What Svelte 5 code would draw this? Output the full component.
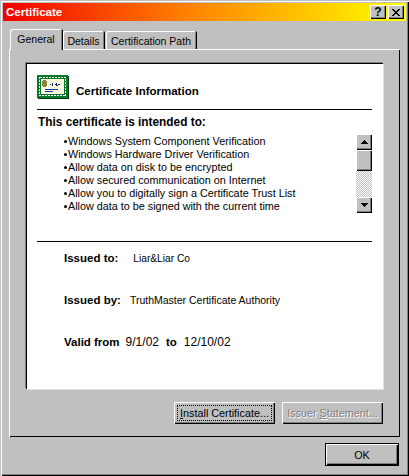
<script lang="ts">
  const purposes = [
    "Windows System Component Verification",
    "Windows Hardware Driver Verification",
    "Allow data on disk to be encrypted",
    "Allow secured communication on Internet",
    "Allow you to digitally sign a Certificate Trust List",
    "Allow data to be signed with the current time",
  ];
</script>

<div class="window">
  <div class="titlebar">
    <span class="titlebar__text">Certificate</span>
    <div class="titlebar__buttons">
      <button class="capbtn capbtn--help">?</button>
      <button class="capbtn capbtn--close" aria-label="Close">
        <svg width="8" height="7" viewBox="0 0 8 7" shape-rendering="crispEdges">
          <path d="M0 0h2v1h1v1h2V1h1V0h2v1H7v1H6v1H5v1h1v1h1v1h1v1H6V6H5V5H3v1H2v1H0V6h1V5h1V4h1V3H2V2H1V1H0z" fill="#000" />
        </svg>
      </button>
    </div>
  </div>

  <div class="tabs">
    <div class="tab tab--active">General</div>
    <div class="tab tab--details">Details</div>
    <div class="tab tab--path">Certification Path</div>
  </div>

  <div class="panel">
    <div class="sheet">
      <div class="head">
        <svg class="head__icon" width="32" height="24" viewBox="0 0 32 24" shape-rendering="crispEdges">
          <rect x="0" y="0" width="31" height="23" fill="#0a7a2a" />
          <rect x="31" y="1" width="1" height="23" fill="#003a10" />
          <rect x="1" y="23" width="31" height="1" fill="#003a10" />
          <rect x="2.5" y="2.5" width="26" height="18" fill="none" stroke="#fff" stroke-dasharray="2 1" />
          <rect x="4" y="4" width="23" height="15" fill="#fbf8e0" />
          <rect x="5" y="6" width="5" height="5" fill="#8a8040" />
          <rect x="6" y="5" width="3" height="7" fill="#8a8040" />
          <path d="M12 10h1V9h1v1h1V8h1v3h1V9h1v1h1V8h1v2h1V9h2v1h-2v1h-2V9h-2v2h-2v-1h-2z" fill="#102060" />
          <rect x="8" y="14" width="13" height="1" fill="#1830a0" />
          <rect x="8" y="16" width="8" height="1" fill="#1830a0" />
        </svg>
        <span class="head__title">Certificate Information</span>
      </div>

      <div class="rule"></div>

      <div class="intended">This certificate is intended to:</div>

      <div class="purposes">
        <ul class="purposes__list">
          {#each purposes as p}
            <li>{p}</li>
          {/each}
        </ul>
        <div class="scroll">
          <div class="scroll__btn">
            <svg width="7" height="4" viewBox="0 0 7 4" shape-rendering="crispEdges"><path d="M3 0h1v1h1v1h1v1h1v1H0V3h1V2h1V1h1z" /></svg>
          </div>
          <div class="scroll__thumb"></div>
          <div class="scroll__track"></div>
          <div class="scroll__btn">
            <svg width="7" height="4" viewBox="0 0 7 4" shape-rendering="crispEdges"><path d="M0 0h7v1H6v1H5v1H4v1H3V3H2V2H1V1H0z" /></svg>
          </div>
        </div>
      </div>

      <div class="rule rule--second"></div>

      <div class="details">
        <div class="row"><b>Issued to:</b><span class="row__to">Liar&amp;Liar Co</span></div>
        <div class="row"><b>Issued by:</b><span class="row__by">TruthMaster Certificate Authority</span></div>
        <div class="row">
          <b>Valid from</b><span class="row__from">9/1/02</span><b class="row__sep">to</b><span class="row__end">12/10/02</span>
        </div>
      </div>
    </div>

    <div class="actions">
      <button class="btn btn--focus"><span class="btn__focus"><u>I</u>nstall Certificate...</span></button>
      <button class="btn btn--off" disabled>Issuer <u>S</u>tatement...</button>
    </div>
  </div>

  <div class="footer">
    <button class="btn btn--ok">OK</button>
  </div>
</div>

<style>
  :global(body) {
    background: #c0c0c0;
  }
  .window {
    box-sizing: border-box;
    width: 409px;
    height: 476px;
    padding: 3px;
    background: #c0c0c0;
    box-shadow: inset 1px 1px 0 #c0c0c0, inset 2px 2px 0 #fff, inset -1px -1px 0 #000, inset -2px -2px 0 #808080;
    font-family: "Liberation Sans", Arial, sans-serif;
    font-size: 10.8px;
    color: #000;
    overflow: hidden;
  }
  .titlebar {
    display: flex;
    align-items: center;
    justify-content: space-between;
    height: 18px;
    padding: 0 2px 0 3px;
    background: linear-gradient(90deg, #f20000 0%, #ff8000 45%, #ffff00 100%);
  }
  .titlebar__text {
    color: #fff;
    font-weight: 700;
    font-size: 11.5px;
  }
  .titlebar__buttons {
    display: flex;
    gap: 2px;
  }
  .capbtn {
    display: flex;
    align-items: center;
    justify-content: center;
    width: 16px;
    height: 14px;
    padding: 0;
    border: 0;
    background: #c0c0c0;
    box-shadow: inset 1px 1px 0 #fff, inset -1px -1px 0 #000, inset -2px -2px 0 #808080;
    font: 700 12px "Liberation Sans", sans-serif;
    color: #000;
  }
  .tabs {
    display: flex;
    align-items: flex-end;
    height: 28px;
    margin-left: 7px;
    position: relative;
    z-index: 1;
  }
  .tab {
    box-sizing: border-box;
    height: 18px;
    padding: 4px 0 0;
    text-align: center;
    font-size: 10.5px;
    white-space: nowrap;
    border-radius: 2px 2px 0 0;
    background: #c0c0c0;
    box-shadow: inset 1px 1px 0 #fff, inset -1px 0 0 #808080, 1px 0 0 #000;
  }
  .tab--active {
    width: 52px;
    height: 21px;
    padding-top: 4px;
    margin-bottom: -1px;
  }
  .tab--details {
    width: 41px;
    margin-left: 1px;
  }
  .tab--path {
    width: 90px;
    margin-left: 2px;
  }
  .panel {
    box-sizing: border-box;
    height: 388px;
    margin: 0 6px;
    padding: 14px 17px 0;
    box-shadow: inset 1px 1px 0 #fff, inset -1px -1px 0 #000;
  }
  .sheet {
    box-sizing: border-box;
    height: 326px;
    padding: 12px 11px 0;
    background: #fff;
    box-shadow: inset 1px 1px 0 #000, -1px -1px 0 #808080, 1px 1px 0 #dfdfdf;
  }
  .head {
    display: flex;
    align-items: center;
    gap: 7px;
    height: 24px;
  }
  .head__icon {
    flex: none;
  }
  .head__title {
    margin-top: 7px;
    font-weight: 700;
    font-size: 11.5px;
  }
  .rule {
    height: 1px;
    margin-top: 10px;
    background: #000;
  }
  .rule--second {
    margin-top: 28px;
  }
  .intended {
    margin: 6px 0 0 1px;
    line-height: 13px;
    font-weight: 700;
    font-size: 11.85px;
  }
  .purposes {
    display: flex;
    justify-content: space-between;
    padding-left: 27px;
    height: 79px;
    margin-top: 5px;
  }
  .purposes__list {
    margin: 0;
    padding: 1px 0 0;
    list-style: none;
  }
  .purposes__list li {
    height: 13px;
    line-height: 13px;
    white-space: nowrap;
  }
  .purposes__list li::before {
    content: "";
    display: inline-block;
    width: 3px;
    height: 3px;
    margin-right: 1px;
    vertical-align: 2px;
    background: #000;
    border-radius: 50%;
  }
  .scroll {
    display: flex;
    flex-direction: column;
    width: 16px;
    flex: none;
  }
  .scroll__btn,
  .scroll__thumb {
    display: flex;
    align-items: center;
    justify-content: center;
    flex: none;
    background: #c0c0c0;
    box-shadow: inset 1px 1px 0 #fff, inset -1px -1px 0 #000, inset -2px -2px 0 #808080;
  }
  .scroll__btn {
    height: 16px;
  }
  .scroll__thumb {
    height: 21px;
  }
  .scroll__track {
    flex: 1;
    background: repeating-conic-gradient(#fff 0 25%, #c0c0c0 0 50%) 0 0 / 2px 2px;
  }
  .details {
    padding: 10px 0 0 27px;
    display: flex;
    flex-direction: column;
    gap: 29px;
  }
  .row {
    display: flex;
    height: 13px;
    line-height: 13px;
    font-size: 10.5px;
    white-space: nowrap;
  }
  .row b {
    font-size: 11.5px;
  }
  .row__to {
    margin-left: 15px;
    font-size: 10.2px;
  }
  .row__by {
    margin-left: 9px;
  }
  .row__from {
    margin-left: 6px;
    font-size: 12px;
  }
  .row__sep {
    margin-left: 7px;
  }
  .row__end {
    margin-left: 7px;
    font-size: 12px;
  }
  .actions {
    display: flex;
    justify-content: flex-end;
    gap: 7px;
    margin-top: 13px;
  }
  .btn {
    box-sizing: border-box;
    width: 101px;
    height: 22px;
    padding: 0;
    border: 0;
    background: #c0c0c0;
    box-shadow: inset 1px 1px 0 #fff, inset -1px -1px 0 #000, inset -2px -2px 0 #808080;
    font: 10.8px "Liberation Sans", Arial, sans-serif;
    color: #000;
    white-space: nowrap;
  }
  .btn__focus {
    display: flex;
    align-items: center;
    justify-content: center;
    height: 14px;
    margin: 0 3px;
    border: 1px dotted #000;
  }
  .btn--off {
    color: #808080;
    text-shadow: 1px 1px 0 #fff;
  }
  .footer {
    display: flex;
    justify-content: flex-end;
    margin: 6px 7px 0 0;
  }
  .btn--ok {
    width: 74px;
    height: 23px;
    box-shadow: inset 0 0 0 1px #000, inset 2px 2px 0 #fff, inset -2px -2px 0 #000, inset -3px -3px 0 #808080;
  }
</style>
